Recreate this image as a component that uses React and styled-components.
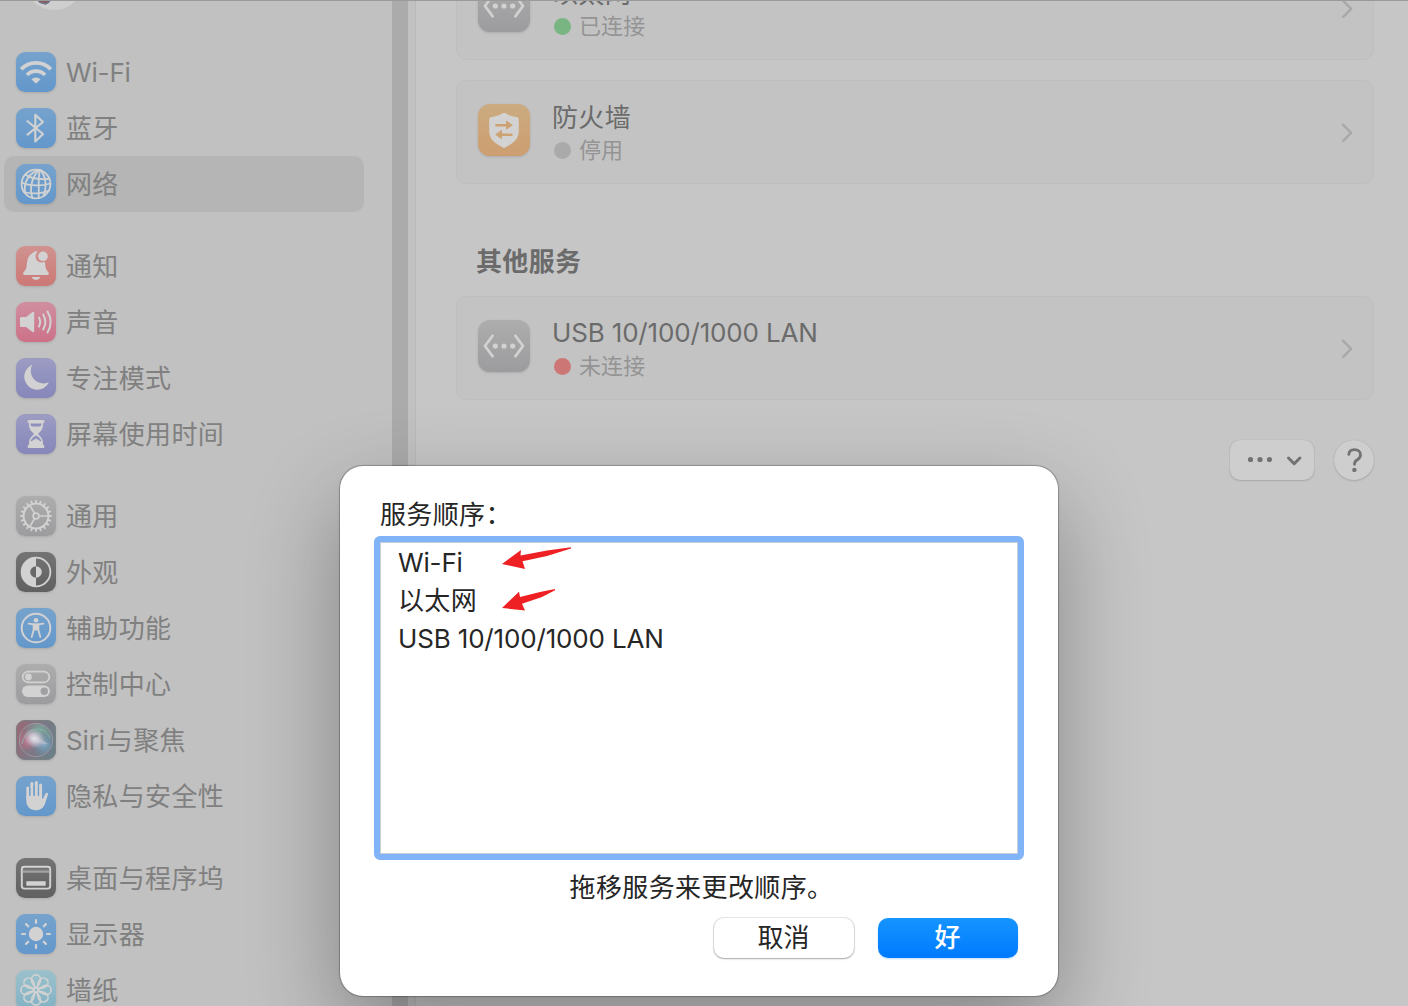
import React from "react";
import styled, { createGlobalStyle } from "styled-components";

const Global = createGlobalStyle`
  * { box-sizing: border-box; }
  html, body { margin: 0; padding: 0; overflow: hidden; }
  body {
    font-family: Inter, "Noto Sans CJK SC", sans-serif;
    font-size: 26px;
    letter-spacing: 0.35px;
    -webkit-font-smoothing: antialiased;
  }
`;

const Screen = styled.div`
  position: relative;
  display: flex;
  width: 1408px;
  height: 1006px;
  overflow: hidden;
  background: #c6c6c6;
`;
const TopLine = styled.div`
  position: absolute;
  inset: 0 0 auto 0;
  height: 1px;
  background: #9a9a9a;
`;

const Sidebar = styled.nav`
  position: relative;
  flex: none;
  width: 392px;
  padding: 44px 28px 0 4px;
  display: flex;
  flex-direction: column;
  gap: 26px;
  background: #c1c1c1;
`;
const Avatar = styled.svg`
  position: absolute;
  left: 24px;
  top: -50px;
`;
const Group = styled.div`
  display: flex;
  flex-direction: column;
`;
const Item = styled.div`
  flex: none;
  height: 56px;
  padding-left: 12px;
  display: flex;
  align-items: center;
  gap: 10px;
  border-radius: 10px;
  color: #808080;
  white-space: nowrap;
  background: ${(p) => (p.$active ? "#b5b5b5" : "transparent")};
`;
const Tile = styled.svg`
  flex: none;
  display: block;
  overflow: visible;
  filter: drop-shadow(0 1px 1px rgba(0, 0, 0, 0.12));
`;
const Label = styled.span`
  line-height: 40px;
  padding-top: 2px;
`;
const Latin = styled.span`
  letter-spacing: -0.16px;
  margin-right: ${(p) => p.$after || 0}px;
`;
const Scroller = styled.div`
  flex: none;
  width: 16px;
  background: #ababab;
`;
const Divider = styled.div`
  flex: none;
  width: 8px;
  background: #c1c1c1;
  border-right: 1px solid #b9b9b9;
`;

const Content = styled.main`
  flex: 1;
  padding: 0 34px 0 40px;
  display: flex;
  flex-direction: column;
`;
const Card = styled.section`
  flex: none;
  height: 104px;
  margin-top: ${(p) => p.$top}px;
  padding: 0 20px 0 21px;
  display: flex;
  align-items: center;
  border: 1px solid #bebebe;
  border-radius: 11px;
  background: #c3c3c3;

  > ${Tile} {
    margin-bottom: 4px;
  }
`;
const CardText = styled.div`
  flex: 1;
  margin-left: 22px;
  display: flex;
  flex-direction: column;
`;
const CardTitle = styled.div`
  height: 36px;
  line-height: ${(p) => (p.$latin ? 36 : 38)}px;
  color: #6b6b6b;
`;
const Status = styled.div`
  height: 30px;
  line-height: 30px;
  display: flex;
  align-items: center;
  gap: 8px;
  padding-left: 2px;
  font-size: 22px;
  letter-spacing: 0.1px;
  color: #949494;
`;
const Dot = styled.i`
  width: 17px;
  height: 17px;
  border-radius: 50%;
  background: ${(p) => p.$color};
`;
const Heading = styled.h2`
  margin: 58px 0 0 20px;
  height: 40px;
  line-height: 40px;
  font-size: 26px;
  font-weight: 700;
  color: #6b6b6b;
`;
const Actions = styled.div`
  margin-top: 40px;
  display: flex;
  justify-content: flex-end;
  gap: 20px;
`;
const MoreButton = styled.button`
  width: 84px;
  height: 40px;
  padding: 0;
  border: 0;
  border-radius: 10px;
  background: #cecece;
  box-shadow: 0 0 1px rgba(0, 0, 0, 0.18), 0 1px 2px rgba(0, 0, 0, 0.14);
`;
const HelpButton = styled(MoreButton)`
  width: 40px;
  border-radius: 50%;
`;

const Dialog = styled.div`
  position: absolute;
  left: 340px;
  top: 466px;
  width: 718px;
  height: 530px;
  padding: 28px 34px 0;
  display: flex;
  flex-direction: column;
  border-radius: 23px;
  background: #fff;
  color: #262626;
  box-shadow: 0 0 1px 1px rgba(0, 0, 0, 0.26), 0 36px 90px rgba(0, 0, 0, 0.32);
`;
const DialogTitle = styled.div`
  height: 42px;
  line-height: 42px;
  padding-left: 6px;
`;
const List = styled.div`
  height: 324px;
  padding: 2px 17px;
  border: 6px solid #80b3f8;
  border-radius: 6px;
  box-shadow: inset 0 0 0 1px #c9cdd4;
`;
const ListRow = styled.div`
  height: 38px;
  line-height: 38px;
  display: flex;
  align-items: center;
  padding-left: 1px;
`;
const Arrow = styled.svg`
  margin-left: ${(p) => p.$gap}px;
`;
const Caption = styled.div`
  height: 54px;
  line-height: 55px;
  padding-left: 5px;
  letter-spacing: 0.4px;
  text-align: center;
`;
const Buttons = styled.div`
  margin-top: 4px;
  padding-right: 6px;
  display: flex;
  justify-content: flex-end;
  gap: 24px;
`;
const Button = styled.button`
  width: 140px;
  height: 40px;
  padding: 0 1px 0 0;
  border: 0;
  border-radius: 10px;
  font: inherit;
  font-weight: ${(p) => (p.$primary ? 500 : 400)};
  line-height: 38px;
  color: ${(p) => (p.$primary ? "#fff" : "#262626")};
  background: ${(p) => (p.$primary ? "linear-gradient(#1694ff, #007afe)" : "#fff")};
  box-shadow: ${(p) =>
    p.$primary
      ? "0 1px 2px rgba(0, 122, 255, 0.25)"
      : "0 0 0 1px rgba(0, 0, 0, 0.09), 0 1px 2px rgba(0, 0, 0, 0.28)"};
`;

const GRADS = {
  blue: ["#76a3cd", "#6397cb"],
  red: ["#d09390", "#cc7876"],
  pink: ["#cf8fa0", "#cd7188"],
  purple: ["#9c9cc3", "#8686ba"],
  gray: ["#adadae", "#9c9c9e"],
  dark: ["#747474", "#606060"],
  teal: ["#9bc1cb", "#82b2c5"],
  orange: ["#cbab80", "#cd9e70"],
};
const INK = "#d2d2d2";

function Icon({ tone, size = 40, box = 40, children }) {
  const id = `g-${tone}-${size}`;
  return (
    <Tile width={size} height={size} viewBox={`0 0 ${box} ${box}`}>
      <defs>
        <linearGradient id={id} x1="0" y1="0" x2="0" y2="1">
          <stop offset="0" stopColor={GRADS[tone][0]} />
          <stop offset="1" stopColor={GRADS[tone][1]} />
        </linearGradient>
      </defs>
      <rect width={box} height={box} rx={box * 0.23} fill={`url(#${id})`} />
      {children}
    </Tile>
  );
}

const line = (w) => ({ fill: "none", stroke: INK, strokeWidth: w, strokeLinecap: "round", strokeLinejoin: "round" });
const spokes = (n, f) => Array.from({ length: n }, (_, i) => f((i * 360) / n));

const WifiIcon = () => (
  <Icon tone="blue">
    <g {...line(3.7)} strokeLinecap="butt">
      <path d="M5.200 17.200a20.500 20.500 0 0 1 29.600 0" />
      <path d="M11 23a12.600 12.600 0 0 1 18 0" />
    </g>
    <path d="M15.500 27.300a6.300 6.300 0 0 1 9 0L20.700 31.100q-.7.600-1.400 0Z" fill={INK} />
  </Icon>
);
const BluetoothIcon = () => (
  <Icon tone="blue">
    <path d="M11.500 13.200 27 26 19.300 33.500V6.700L27 14 11.500 26.600" {...line(2.1)} />
  </Icon>
);
const GlobeIcon = () => (
  <Icon tone="blue">
    <g {...line(1.8)}>
      <circle cx="20" cy="20" r="14.400" />
      <path d="M24 6C17 10 12.500 24 16.500 34" />
      <path d="M24 6C21.500 14 23.500 27 22.500 34" />
      <path d="M24 6C30 11 31 23 27.500 32" />
      <path d="M23.500 5.800C13 8.500 7.500 18 9 28.500" />
      <path d="M9.500 10.500C15 15.500 28 15.500 33.500 14.500" />
      <path d="M5.800 18.500C13 22.500 27 22 34.300 19.500" />
      <path d="M8 28C15 30.500 27 29.500 33 26.500" />
    </g>
  </Icon>
);
const BellIcon = () => (
  <Icon tone="red">
    <path d="M19 5.500c.9-.6 2-.4 2.600.3a6 6 0 0 0 7 9.700c1 4.500.6 7.500 3.600 10.400.9.900 1 3.100-.7 3.100h-23c-1.700 0-1.600-2.200-.7-3.100 3.500-3.500 2.600-6.500 3.400-11 .8-4.500 3.400-7 7.800-9.400Z" fill={INK} />
    <path d="M15.800 31h8.400a4.300 3.600 0 0 1-8.400 0Z" fill={INK} />
    <circle cx="27" cy="10.300" r="4.800" fill={INK} />
  </Icon>
);
const SoundIcon = () => (
  <Icon tone="pink">
    <path d="M5.500 15h4.600l6.400-4.900c.8-.6 1.700-.1 1.700.8v18.200c0 .9-.9 1.400-1.700.8L10.100 25H5.500c-.9 0-1.500-.6-1.500-1.500v-7c0-.9.600-1.500 1.500-1.500Z" fill={INK} />
    <g {...line(2)}>
      <path d="M23 15.600a9 9 0 0 1 0 8.800" />
      <path d="M27.200 12.500a15 15 0 0 1 0 15" />
      <path d="M31.500 9.500a20.500 20.500 0 0 1 0 21" />
    </g>
  </Icon>
);
const MoonIcon = () => (
  <Icon tone="purple">
    <path d="M15.800 7.600c-3.400 8.600 2.200 17.800 11.700 17.800 1.600 0 3-.3 4.600-.9.400-.1.700.2.500.6A13 13 0 1 1 15.200 7.200c.4-.2.700 0 .6.400Z" fill={INK} />
  </Icon>
);
const HourglassIcon = () => (
  <Icon tone="purple">
    <path d="M13 6h14c2 0 2 3 0 3.300.2 5.200-1.500 7.400-4.200 9.600-.7.600-.7 1.600 0 2.200 2.700 2.200 4.400 4.400 4.200 9.600 2 .3 2 3.300 0 3.300H13c-2 0-2-3 0-3.300-.2-5.200 1.500-7.400 4.200-9.600.7-.6.700-1.600 0-2.200-2.700-2.200-4.400-4.400-4.200-9.600-2-.3-2-3.300 0-3.300Z" fill={INK} />
    <path d="M14.600 9.500h10.800c0 1-.1 1.700-.4 2.400-3 .9-7 .9-10 0-.3-.7-.4-1.400-.4-2.400ZM20.700 21.700c3.200 2 4.400 4 4.600 6L20 24.400l-5.300 3.300c.2-2 1.400-4 4.600-6Z" fill="#9090be" />
  </Icon>
);
const GearIcon = () => (
  <Icon tone="gray">
    {spokes(20, (a) => (
      <path key={a} d="M20 7V5" transform={`rotate(${a} 20 20)`} {...line(1.900)} />
    ))}
    <circle cx="20" cy="20" r="12.400" {...line(1.900)} />
    <circle cx="20" cy="20" r="2.900" {...line(1.700)} />
    {[90, 210, 330].map((a) => (
      <path key={a} d="M20 17V8" transform={`rotate(${a} 20 20)`} {...line(1.700)} />
    ))}
  </Icon>
);
const AppearanceIcon = () => (
  <Icon tone="dark">
    <circle cx="20" cy="20" r="14.400" {...line(1.800)} />
    <path d="M20 5.600a14.400 14.400 0 0 0 0 28.800Z" fill={INK} />
    <path d="M20 14.200a5.800 5.800 0 0 0 0 11.600Z" fill="#686868" />
    <path d="M20 14.200a5.800 5.800 0 0 1 0 11.600Z" fill={INK} />
  </Icon>
);
const AccessIcon = () => (
  <Icon tone="blue">
    <circle cx="20" cy="20" r="14.300" {...line(2)} />
    <circle cx="20" cy="12.300" r="2.300" fill={INK} />
    <path d="M12.600 15.700c5 .8 9.800.8 14.800 0" {...line(1.700)} />
    <path d="M17.600 16.500v5.500l-1.900 7M22.400 16.500v5.500l1.900 7" {...line(1.800)} />
    <path d="M17 16.300h6v6.200h-6Z" fill={INK} />
  </Icon>
);
const ControlIcon = () => (
  <Icon tone="gray">
    <rect x="6.700" y="7.700" width="26.600" height="10.600" rx="5.300" {...line(1.700)} />
    <circle cx="12.400" cy="13" r="3.400" fill={INK} />
    <rect x="6" y="21.500" width="28" height="11.500" rx="5.750" fill={INK} />
    <circle cx="28.300" cy="27.200" r="3.700" fill="#a0a0a2" />
  </Icon>
);
const SiriIcon = () => (
  <Tile width="40" height="40" viewBox="0 0 40 40">
    <defs>
      <linearGradient id="siri-base" x1="0" y1=".3" x2="1" y2=".7">
        <stop offset="0" stopColor="#976a76" />
        <stop offset=".5" stopColor="#7d7885" />
        <stop offset="1" stopColor="#6a8088" />
      </linearGradient>
      <radialGradient id="siri-green" cx=".62" cy=".2" r=".5">
        <stop offset="0" stopColor="#7ca99d" stopOpacity=".9" />
        <stop offset="1" stopColor="#7ca99d" stopOpacity="0" />
      </radialGradient>
      <radialGradient id="siri-pink" cx=".25" cy=".52" r=".32">
        <stop offset="0" stopColor="#c0758f" />
        <stop offset="1" stopColor="#c0758f" stopOpacity="0" />
      </radialGradient>
      <radialGradient id="siri-blue" cx=".74" cy=".64" r=".38">
        <stop offset="0" stopColor="#82a8c6" />
        <stop offset="1" stopColor="#6490ae" stopOpacity="0" />
      </radialGradient>
      <radialGradient id="siri-glow">
        <stop offset="0" stopColor="#e2e2e4" />
        <stop offset=".4" stopColor="#d2cfda" stopOpacity=".85" />
        <stop offset="1" stopColor="#c0bccb" stopOpacity="0" />
      </radialGradient>
    </defs>
    <rect width="40" height="40" rx="9.200" fill="url(#siri-base)" />
    <rect x=".5" y=".5" width="39" height="39" rx="8.800" fill="none" stroke="#7a8082" />
    <circle cx="20" cy="20" r="16.800" fill="url(#siri-green)" />
    <circle cx="20" cy="20" r="16.800" fill="url(#siri-pink)" />
    <circle cx="20" cy="20" r="16.800" fill="url(#siri-blue)" />
    <circle cx="20" cy="20" r="16.600" fill="none" stroke="#a19ca8" strokeWidth=".8" />
    <path d="M6 24C9 8 27 3 34 18" fill="none" stroke="#88b6ab" strokeWidth=".9" />
    <path d="M15 17c6 0 13 3 17 7-6 1-12-1-17-7Z" fill="#d0d3da" opacity=".45" />
    <ellipse cx="18.500" cy="18.500" rx="11.500" ry="9.500" fill="url(#siri-glow)" transform="rotate(30 18.500 18.500)" />
  </Tile>
);
const HandIcon = () => (
  <Icon tone="blue">
    <g {...line(3)}>
      <path d="M11.800 22V12M15.900 20V7.500M20.300 20V6.500M24.600 20V9" />
    </g>
    <path d="M10.300 20h15.800v2.500c.6.300 1 .1 1.300-.5l2-4.400c.7-1.500 3.100-.8 2.600 1l-3.100 9.300c-1.300 3.800-4.500 6.300-9 6.300-6 0-9.600-4-9.600-9.700Z" fill={INK} />
    <path d="M13.850 12v7M18.100 9v10M22.450 10v9" fill="none" stroke="#6a9ccb" strokeWidth="1" />
  </Icon>
);
const DockIcon = () => (
  <Icon tone="dark">
    <rect x="5.800" y="8.800" width="28.400" height="21.800" rx="2.500" {...line(1.900)} />
    <path d="M7 11.500h26v2.300H7Z" fill="#8a8a8a" />
    <path d="M7 14h26" {...line(0.800)} />
    <rect x="10.300" y="23.300" width="19.400" height="4.500" rx=".7" fill={INK} />
  </Icon>
);
const DisplayIcon = () => (
  <Icon tone="blue">
    <circle cx="20" cy="20" r="7.200" fill={INK} />
    {spokes(8, (a) => (
      <path key={a} d="M20 9V6" transform={`rotate(${a} 20 20)`} {...line(2.200)} />
    ))}
  </Icon>
);
const WallpaperIcon = () => (
  <Icon tone="teal">
    {spokes(8, (a) => (
      <path key={a} d="M20 18C17.500 15.500 15.400 12.800 15.400 9.500a4.600 4.600 0 0 1 9.200 0C24.600 12.800 22.500 15.500 20 18Z" transform={`rotate(${a} 20 20)`} {...line(1.600)} />
    ))}
    <circle cx="20" cy="20" r="2.300" {...line(1.300)} />
  </Icon>
);
const EthernetIcon = () => (
  <Icon tone="gray" size={52} box={52}>
    <path d="M14.600 15.800 7 26l7.600 10.200M37.400 15.800 45 26l-7.600 10.200" {...line(2.700)} />
    <g fill={INK}>
      <circle cx="17.300" cy="26" r="2.600" />
      <circle cx="26" cy="26" r="2.600" />
      <circle cx="34.700" cy="26" r="2.600" />
    </g>
  </Icon>
);
const FirewallIcon = () => (
  <Icon tone="orange" size={52} box={52}>
    <path d="M25 9q1-.5 2 0c4 2.600 7.300 3.600 11.800 4.100q2 .3 2 2.300V27c0 8.500-6 12.500-14 16.700q-.8.400-1.600 0C17.200 39.500 11.200 35.500 11.200 27V15.400q0-2 2-2.300C17.700 12.600 21 11.600 25 9Z" fill={INK} />
    <g fill="#cda272" stroke="#cda272" strokeLinecap="round" strokeLinejoin="round">
      <path d="M18.300 21.300H29M33.500 30.700H23" strokeWidth="2.400" />
      <path d="M28.500 17.500v7.600l5.500-3.800ZM23.500 26.900v7.600L18 30.700Z" strokeWidth="1" />
    </g>
  </Icon>
);

const Chevron = () => (
  <svg width="12" height="20" viewBox="0 0 12 20">
    <path d="m2.200 2.800 8 8-8 8" fill="none" stroke="#a8a8a8" strokeWidth="2.400" strokeLinecap="round" strokeLinejoin="round" />
  </svg>
);

const MENU = [
  [
    [<Latin>Wi-Fi</Latin>, WifiIcon],
    ["蓝牙", BluetoothIcon],
    ["网络", GlobeIcon, true],
  ],
  [
    ["通知", BellIcon],
    ["声音", SoundIcon],
    ["专注模式", MoonIcon],
    ["屏幕使用时间", HourglassIcon],
  ],
  [
    ["通用", GearIcon],
    ["外观", AppearanceIcon],
    ["辅助功能", AccessIcon],
    ["控制中心", ControlIcon],
    [<><Latin $after={2}>Siri</Latin>与聚焦</>, SiriIcon],
    ["隐私与安全性", HandIcon],
  ],
  [
    ["桌面与程序坞", DockIcon],
    ["显示器", DisplayIcon],
    ["墙纸", WallpaperIcon],
  ],
];

function ServiceCard({ top, icon, title, latin, color, status }) {
  return (
    <Card $top={top}>
      {icon}
      <CardText>
        <CardTitle $latin={latin}>{latin ? <Latin>{title}</Latin> : title}</CardTitle>
        <Status>
          <Dot $color={color} />
          {status}
        </Status>
      </CardText>
      <Chevron />
    </Card>
  );
}

export default function App() {
  return (
    <Screen>
      <Global />
      <Sidebar>
        <Avatar width="60" height="60" viewBox="0 0 60 60">
          <circle cx="30" cy="30" r="30" fill="#cfcfcf" />
          <path d="M13 49l3 3.500 5.500 1.500 3-1.500 3-4" fill="#875f63" stroke="#73708a" strokeWidth="1.400" />
        </Avatar>
        {MENU.map((group, g) => (
          <Group key={g}>
            {group.map(([label, Glyph, active], i) => (
              <Item key={i} $active={active}>
                <Glyph />
                <Label>{label}</Label>
              </Item>
            ))}
          </Group>
        ))}
      </Sidebar>
      <Scroller />
      <Divider />
      <Content>
        <ServiceCard top={-44} icon={<EthernetIcon />} title="以太网" color="#79b583" status="已连接" />
        <ServiceCard top={20} icon={<FirewallIcon />} title="防火墙" color="#aaaaaa" status="停用" />
        <Heading>其他服务</Heading>
        <ServiceCard
          top={14}
          icon={<EthernetIcon />}
          title="USB 10/100/1000 LAN"
          latin
          color="#cc7776"
          status="未连接"
        />
        <Actions>
          <MoreButton>
            <svg width="84" height="40" viewBox="0 0 84 40">
              <g fill="#727272">
                <circle cx="20.500" cy="19.500" r="2.600" />
                <circle cx="30" cy="19.500" r="2.600" />
                <circle cx="39.500" cy="19.500" r="2.600" />
              </g>
              <path d="m58.500 18 5.700 5.700 5.700-5.700" fill="none" stroke="#727272" strokeWidth="3" strokeLinecap="round" strokeLinejoin="round" />
            </svg>
          </MoreButton>
          <HelpButton>
            <svg width="40" height="40" viewBox="0 0 40 40">
              <path d="M14.800 14.300c.2-3 2.300-4.700 5.700-4.700 3.600 0 6 2 6 5.100 0 2.300-1.100 3.700-3.200 5-2.200 1.300-2.800 2.200-2.800 4.300v.3" fill="none" stroke="#727272" strokeWidth="2.800" strokeLinecap="round" />
              <circle cx="20.400" cy="29.900" r="2.200" fill="#727272" />
            </svg>
          </HelpButton>
        </Actions>
      </Content>

      <Dialog>
        <DialogTitle>服务顺序：</DialogTitle>
        <List>
          <ListRow>
            <Latin>Wi-Fi</Latin>
            <Arrow $gap={39} width="70" height="32" viewBox="0 0 70 32">
              <path d="M0 17 19 3l-.5 5.500L45 3.500 69 .3v1.200L45 9l-24.500 5.300L23 22Z" fill="#ee2024" />
            </Arrow>
          </ListRow>
          <ListRow>
            以太网
            <Arrow $gap={25} width="54" height="26" viewBox="0 0 54 26">
              <path d="M0 20 17 3.700 18 9l20-5L53 1v1.300L40 9l-20 6.800 3 6.700Z" fill="#ee2024" />
            </Arrow>
          </ListRow>
          <ListRow>
            <Latin>USB 10/100/1000 LAN</Latin>
          </ListRow>
        </List>
        <Caption>拖移服务来更改顺序。</Caption>
        <Buttons>
          <Button>取消</Button>
          <Button $primary>好</Button>
        </Buttons>
      </Dialog>
      <TopLine />
    </Screen>
  );
}
